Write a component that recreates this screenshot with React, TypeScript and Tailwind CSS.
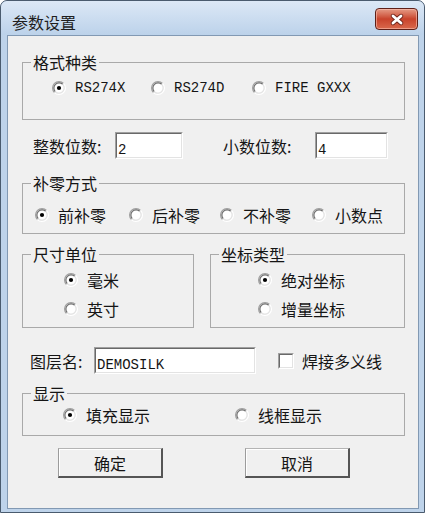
import clsx from "clsx";

const mono = "font-['Liberation_Mono',monospace] text-[14px]";

function RadioGlyph({ checked }: { checked?: boolean }) {
  return (
    <svg width="14" height="14" viewBox="0 0 12 12" className="shrink-0">
      <circle cx="6" cy="6" r="4.2" fill="#ffffff" />
      <path d="M2.11 9.89 A5.5 5.5 0 0 1 9.89 2.11" fill="none" stroke="#a0a0a0" strokeWidth="1" />
      <path d="M2.11 9.89 A5.5 5.5 0 0 0 9.89 2.11" fill="none" stroke="#ffffff" strokeWidth="1" />
      <path d="M2.82 9.18 A4.5 4.5 0 0 1 9.18 2.82" fill="none" stroke="#6e6e6e" strokeWidth="1" />
      <path d="M2.82 9.18 A4.5 4.5 0 0 0 9.18 2.82" fill="none" stroke="#e3e3e3" strokeWidth="1" />
      {checked && <circle cx="6" cy="6" r="1.8" fill="#000000" />}
    </svg>
  );
}

function Radio({
  label,
  checked,
  latin,
  className,
}: {
  label: string;
  checked?: boolean;
  latin?: boolean;
  className?: string;
}) {
  return (
    <div className={clsx("flex items-center h-[18px] shrink-0", className)}>
      <RadioGlyph checked={checked} />
      <span className={clsx("ml-[9px] whitespace-nowrap leading-[18px]", latin ? mono : "text-[16px]")}>
        {label}
      </span>
    </div>
  );
}

function Group({
  title,
  className,
  children,
}: {
  title: string;
  className?: string;
  children: React.ReactNode;
}) {
  return (
    <fieldset className={clsx("border border-[#a9a9a9] min-w-0 shrink-0", className)}>
      <legend className="ml-[8px] px-[2px] text-[16px] leading-[18px]">{title}</legend>
      {children}
    </fieldset>
  );
}

function Sunken({ className, children }: { className?: string; children?: React.ReactNode }) {
  return (
    <div
      className={clsx(
        "border border-t-[#a0a0a0] border-l-[#a0a0a0] border-b-[#ffffff] border-r-[#ffffff] shrink-0",
        className
      )}
    >
      <div className="h-full w-full border border-t-[#696969] border-l-[#696969] border-b-[#e3e3e3] border-r-[#e3e3e3] bg-white pl-[1px] pt-[1px]">
        {children}
      </div>
    </div>
  );
}

function Button({ label, className }: { label: string; className?: string }) {
  return (
    <div
      className={clsx(
        "flex items-center justify-center w-[105px] h-[30px] bg-[#f0f0f0] border-t border-l border-t-[#b4b4b4] border-l-[#9c9c9c] border-b-2 border-r-2 border-b-[#555555] border-r-[#555555] shadow-[inset_1px_1px_0_#ffffff] text-[16px] leading-[18px] shrink-0",
        className
      )}
    >
      {label}
    </div>
  );
}

export default function App() {
  return (
    <div className="w-[425px] h-[513px] flex flex-col rounded-t-[7px] border border-[#4a5b6e] bg-[#bed3ea] font-['Noto_Sans_CJK_SC',sans-serif] text-[#151515] overflow-hidden">
      {/* title bar */}
      <div className="flex items-start h-[34px] shrink-0 rounded-t-[6px] bg-linear-to-b from-[#dce8f6] to-[#bcd2ea]">
        <p className="ml-[11px] mt-[12px] text-[16px] leading-[18px] text-[#1e1e1e]">参数设置</p>
        <div className="ml-auto mr-[6px] mt-[7px] w-[43px] h-[22px] rounded-[4px] border border-[#5e2018] bg-linear-to-b from-[#e49a85] via-[#c8432b] to-[#d9684c] flex items-center justify-center shadow-[inset_0_0_0_1px_rgba(255,200,185,0.55)]">
          <svg width="16" height="13" viewBox="0 0 16 13">
            <path d="M4 3 L12 10 M12 3 L4 10" stroke="#6e241a" strokeWidth="4.4" strokeLinecap="round" />
            <path d="M4 3 L12 10 M12 3 L4 10" stroke="#ffffff" strokeWidth="2.8" strokeLinecap="round" />
          </svg>
        </div>
      </div>

      {/* client area */}
      <div className="ml-[6px] w-[412px] flex-1 mb-[3px] border border-[#8299b3] bg-[#f0f0f0] flex flex-col">
        <Group title="格式种类" className="mt-[17px] ml-[14px] w-[383px] h-[67px]">
          <div className="flex pl-[29px] pt-[8px]">
            <Radio label="RS274X" checked latin className="w-[99px]" />
            <Radio label="RS274D" latin className="w-[101px]" />
            <Radio label="FIRE GXXX" latin />
          </div>
        </Group>

        <div className="flex items-center mt-[12px] pl-[25px] h-[27px] shrink-0">
          <span className="w-[82px] text-[16px] leading-[18px] whitespace-nowrap">整数位数:</span>
          <Sunken className="w-[68px] h-[27px]">
            <span className={clsx(mono, "leading-[16px]")}>2</span>
          </Sunken>
          <span className="ml-[40px] w-[92px] text-[16px] leading-[18px] whitespace-nowrap">小数位数:</span>
          <Sunken className="w-[73px] h-[27px]">
            <span className={clsx(mono, "leading-[16px]")}>4</span>
          </Sunken>
        </div>

        <Group title="补零方式" className="mt-[15px] ml-[14px] w-[383px] h-[60px]">
          <div className="flex pl-[12px] pt-[14px]">
            <Radio label="前补零" checked className="w-[94px]" />
            <Radio label="后补零" className="w-[91px]" />
            <Radio label="不补零" className="w-[92px]" />
            <Radio label="小数点" />
          </div>
        </Group>

        <div className="flex mt-[11px] ml-[14px] shrink-0">
          <Group title="尺寸单位" className="w-[172px] h-[83px]">
            <div className="flex flex-col gap-[11px] pl-[41px] pt-[8px]">
              <Radio label="毫米" checked />
              <Radio label="英寸" />
            </div>
          </Group>
          <Group title="坐标类型" className="ml-[16px] w-[195px] h-[83px]">
            <div className="flex flex-col gap-[11px] pl-[47px] pt-[8px]">
              <Radio label="绝对坐标" checked />
              <Radio label="增量坐标" />
            </div>
          </Group>
        </div>

        <div className="flex items-center mt-[19px] pl-[22px] h-[27px] shrink-0">
          <span className="w-[64px] text-[16px] leading-[18px] whitespace-nowrap">图层名:</span>
          <Sunken className="w-[162px] h-[27px]">
            <span className={clsx(mono, "leading-[20px]")}>DEMOSILK</span>
          </Sunken>
          <div className="ml-[22px] w-[16px] h-[16px] border border-t-[#a0a0a0] border-l-[#a0a0a0] border-b-white border-r-white shrink-0">
            <div className="w-full h-full border border-t-[#696969] border-l-[#696969] border-b-[#e3e3e3] border-r-[#e3e3e3] bg-white" />
          </div>
          <span className="ml-[8px] text-[16px] leading-[18px] whitespace-nowrap">焊接多义线</span>
        </div>

        <Group title="显示" className="mt-[10px] ml-[14px] w-[383px] h-[52px]">
          <div className="flex pl-[40px] pt-[4px]">
            <Radio label="填充显示" checked className="w-[172px]" />
            <Radio label="线框显示" />
          </div>
        </Group>

        <div className="flex mt-[12px] pl-[50px] shrink-0">
          <Button label="确定" />
          <Button label="取消" className="ml-[82px]" />
        </div>
      </div>
    </div>
  );
}
